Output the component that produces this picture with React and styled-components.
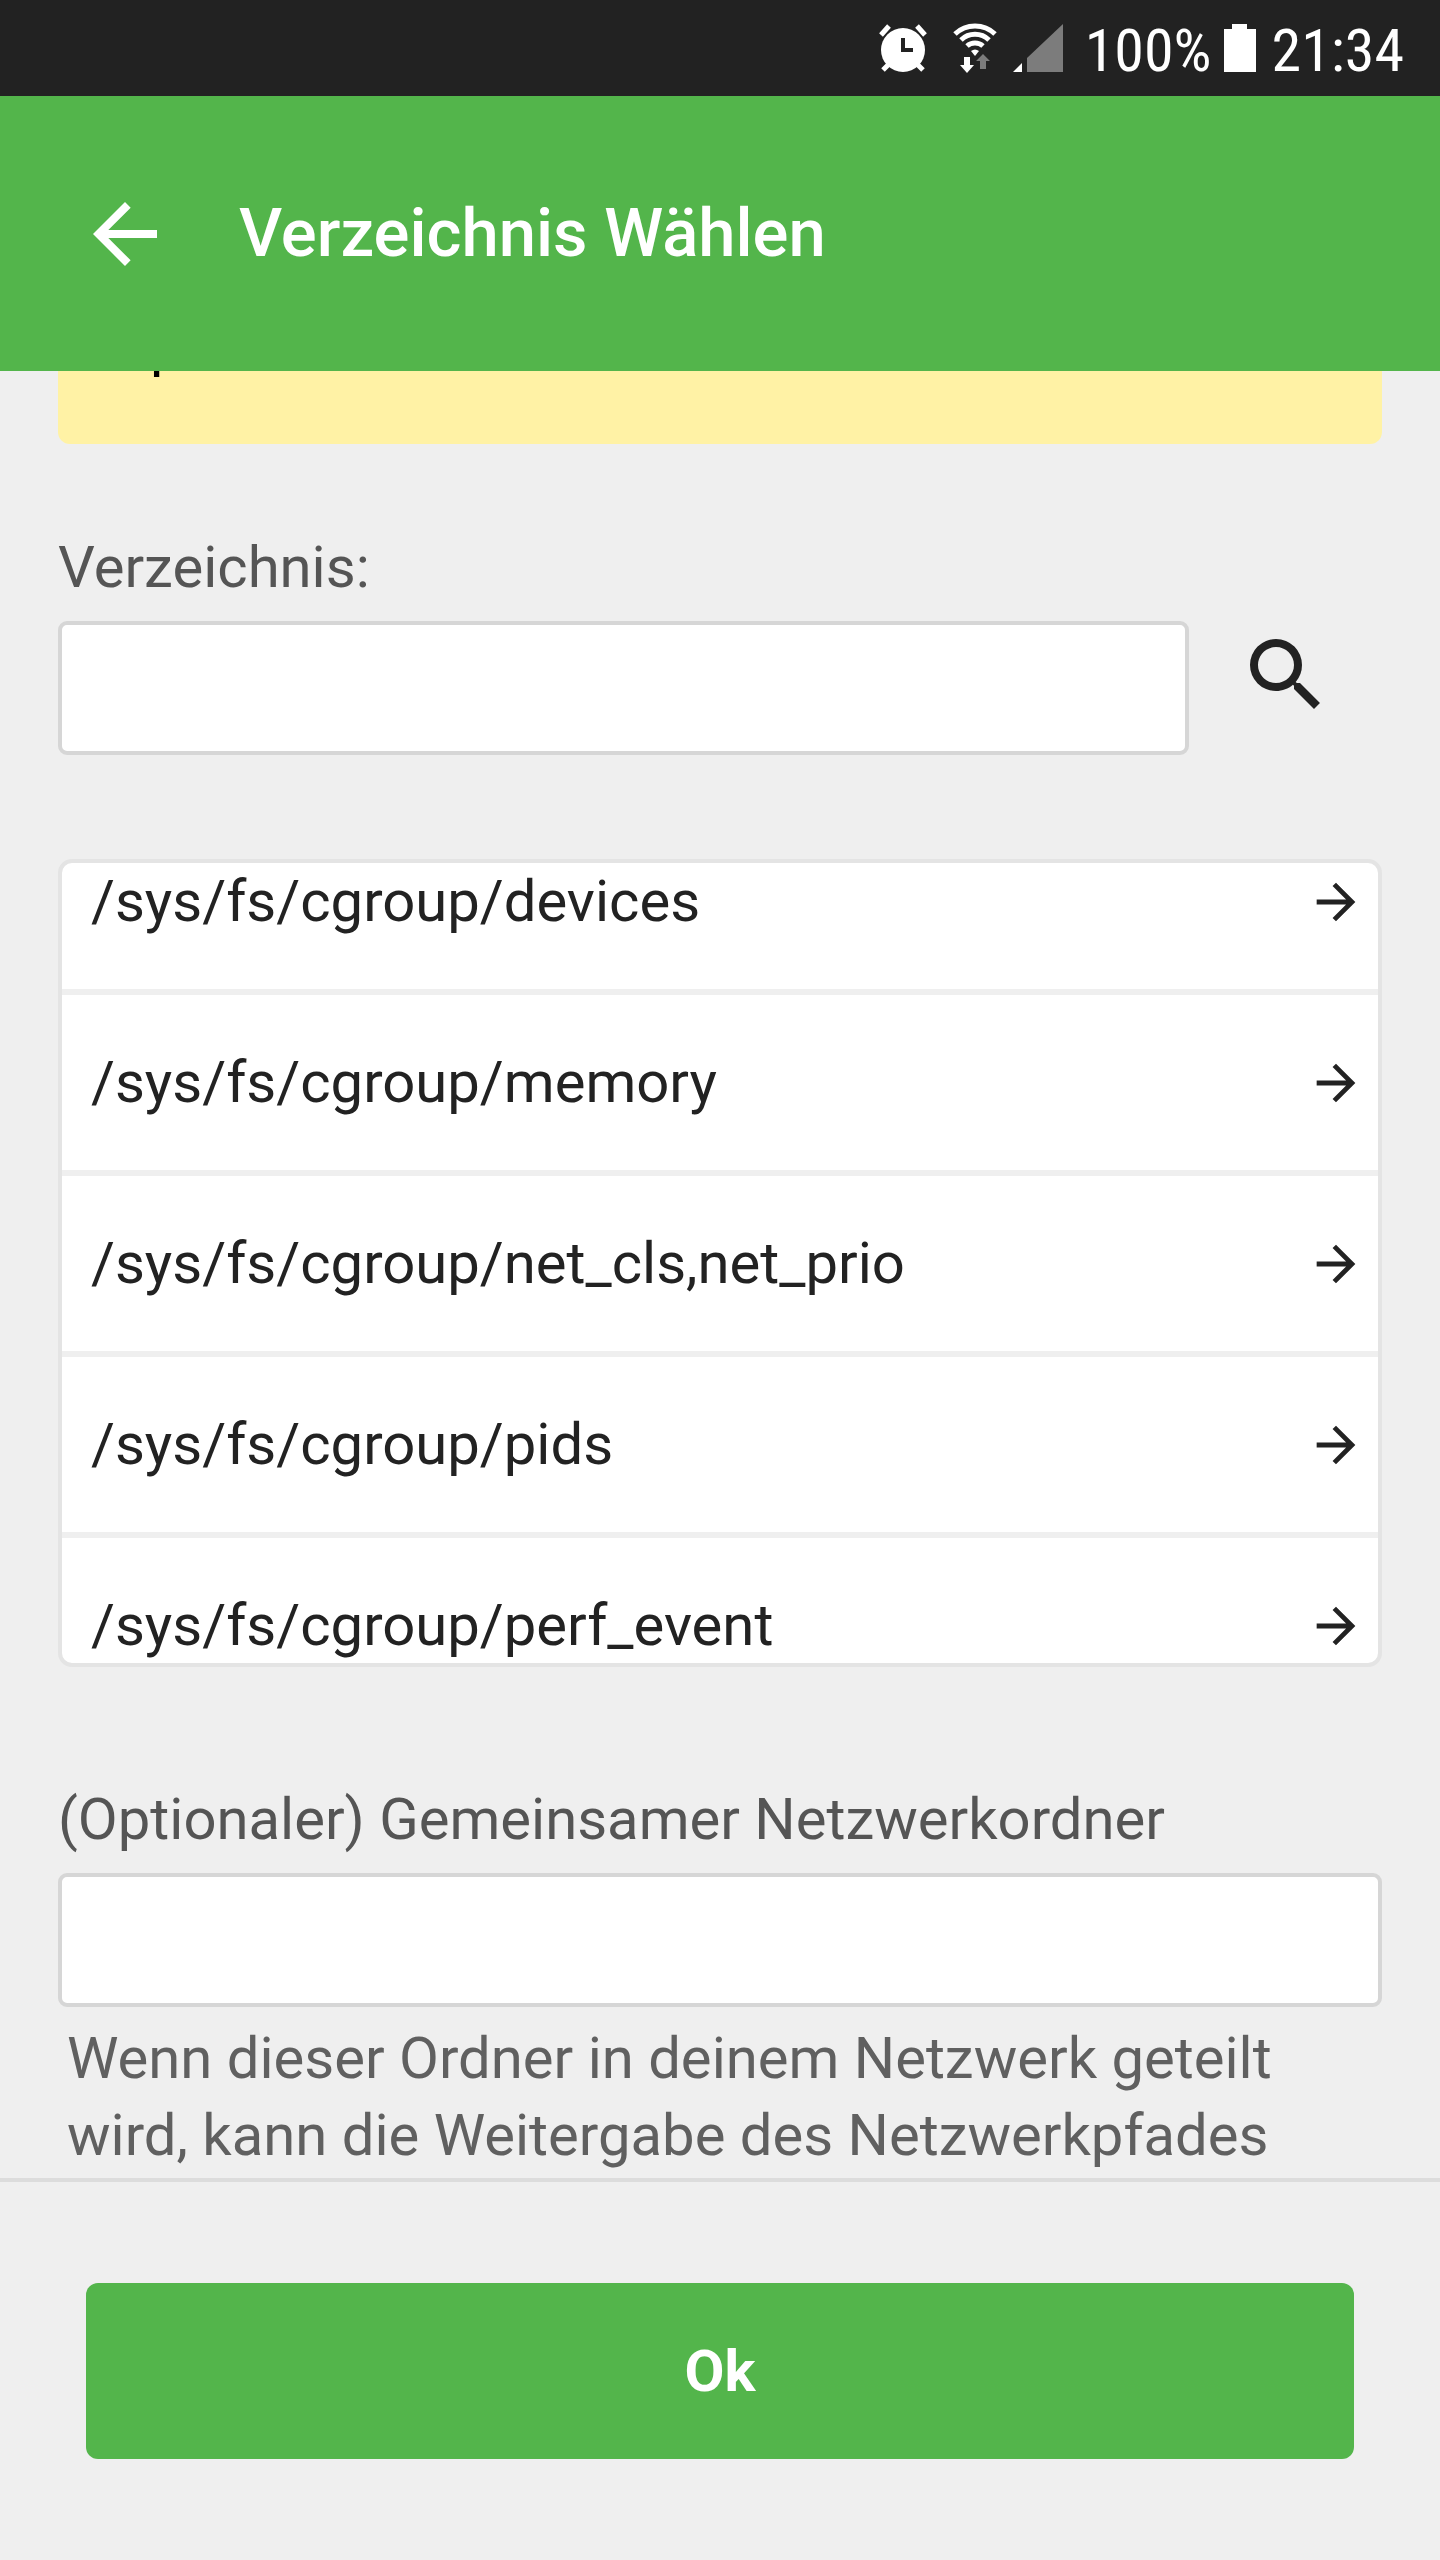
import React from 'react';
import styled, { createGlobalStyle } from 'styled-components';

const GlobalStyle = createGlobalStyle`
* {
  box-sizing: border-box;
}
body {
  margin: 0;
  background: #efefef;
  font-family: Roboto, "Liberation Sans", sans-serif;
}
`

const Screen = styled.div`
display: flex;
flex-direction: column;
min-height: 100vh;
font-size: 58px;
line-height: 77px;
color: #555;
`

const StatusBar = styled.div`
display: flex;
align-items: center;
justify-content: flex-end;
height: 96px;
padding-right: 36px;
background: #222;
color: #fff;
`

const StatusIcons = styled.div`
display: flex;
align-items: center;
gap: 16px;
margin-right: 22px;
`

const StatusText = styled.span`
padding-top: 4px;
font-family: "Roboto Condensed", Roboto, sans-serif;
font-size: 60px;
`

const AlarmSvg = styled.svg`
margin-right: 10px;
`

const BatterySvg = styled.svg`
margin: 0 16px 0 12px;
`

const Header = styled.header`
position: relative;
display: flex;
align-items: center;
gap: 66px;
height: 275px;
padding: 0 77px;
background: #53b54b;
color: #fff;
`

const IconButton = styled.button`
display: flex;
padding: 0;
border: 0;
background: none;
color: inherit;
`

const Title = styled.h1`
margin: 0;
font-size: 67px;
font-weight: 500;
`

const Content = styled.main`
flex: 1;
padding: 0 58px;
overflow: hidden;
`

// scrolled most of the way under the header
const Notice = styled.div`
margin: -124px 0 85px;
padding: 60px 92px;
border-radius: 12px;
background: #fff2a5;
color: #000;
`

const Label = styled.label`
display: block;
margin-bottom: 15px;
`

const TextInput = styled.input`
display: block;
flex: 1;
width: 100%;
min-width: 0;
height: 134px;
padding: 0 24px;
border: 4px solid #d6d6d6;
border-radius: 9px;
background: #fff;
font: inherit;
color: #222;
`

const SearchRow = styled.div`
display: flex;
align-items: flex-start;
margin-bottom: 104px;
`

const SearchButton = styled(IconButton)`
justify-content: center;
width: 193px;
padding: 6px 0;
color: #222;
`

const FolderList = styled.ul`
height: 808px;
margin: 0 0 114px;
padding: 0;
overflow: hidden;
list-style: none;
border: 4px solid #e4e4e4;
border-radius: 14px;
background: #fff;
`

const FolderItem = styled.li`
border-bottom: 6px solid #efefef;

&:first-child {
  margin-top: -49px;
}
`

const FolderButton = styled.button`
display: flex;
align-items: center;
justify-content: space-between;
width: 100%;
height: 175px;
padding: 0 13px 0 29px;
border: 0;
background: none;
font: inherit;
color: #222;
text-align: left;
`

const Help = styled.p`
margin: 13px 0 0;
padding: 0 9px;
color: #606060;
`

const Footer = styled.footer`
padding: 101px 86px;
border-top: 4px solid #dcdcdc;
`

const OkButton = styled.button`
display: block;
width: 100%;
height: 176px;
border: 0;
border-radius: 12px;
background: #53b54b;
color: #fff;
font: inherit;
font-weight: 700;
`

const folders = [
  '/sys/fs/cgroup/devices',
  '/sys/fs/cgroup/memory',
  '/sys/fs/cgroup/net_cls,net_prio',
  '/sys/fs/cgroup/pids',
  '/sys/fs/cgroup/perf_event',
];

const AlarmIcon = () => (
  <AlarmSvg width="48" height="48" viewBox="0 0 48 48" fill="none">
    <path d="M2 11 10 2M38 2l8 9" stroke="#fff" strokeWidth="5" />
    <path d="M10 40l-6 6M38 40l6 6" stroke="#fff" strokeWidth="5" />
    <circle cx="24" cy="26" r="22" fill="#fff" />
    <path d="M24 14v12h10" stroke="#222" strokeWidth="4" />
  </AlarmSvg>
);

const WifiIcon = () => (
  <svg width="44" height="50" viewBox="0 0 44 50" fill="none">
    <path d="M2 11a29 29 0 0 1 40 0" stroke="#fff" strokeWidth="5" />
    <path d="M8 17a20 20 0 0 1 28 0" stroke="#fff" strokeWidth="5" />
    <path d="M14 23a12 12 0 0 1 16 0" stroke="#fff" strokeWidth="5" />
    <path d="M18 28q4-3 8 0l-4 5z" fill="#fff" />
    <path d="M11 34h6v8h4l-7 8-7-8h4z" fill="#fff" />
    <path d="M27 46v-8h-4l7-7 7 7h-4v8z" fill="#7c7c7c" />
  </svg>
);

const SignalIcon = () => (
  <svg width="50" height="48" viewBox="0 0 50 48">
    <path d="M0 48l9-9v9z" fill="#fff" />
    <path d="M14 48V34L50 0v48z" fill="#7c7c7c" />
  </svg>
);

const BatteryIcon = () => (
  <BatterySvg width="32" height="48" viewBox="0 0 32 48">
    <path d="M0 5h8V0h15v5h9v43H0z" fill="#fff" />
  </BatterySvg>
);

const BackIcon = () => (
  <svg width="96" height="96" viewBox="0 0 24 24" fill="currentColor">
    <path d="M20 11H7.83l5.59-5.59L12 4l-8 8 8 8 1.41-1.41L7.83 13H20v-2z" />
  </svg>
);

const ForwardIcon = () => (
  <svg width="58" height="58" viewBox="0 0 24 24" fill="currentColor">
    <path d="M12 4l-1.41 1.41L16.17 11H4v2h12.17l-5.58 5.59L12 20l8-8z" />
  </svg>
);

const SearchIcon = () => (
  <svg width="96" height="96" viewBox="0 0 24 24" fill="currentColor">
    <path d="M15.5 14h-.79l-.28-.27A6.471 6.471 0 0 0 16 9.5 6.5 6.5 0 1 0 9.5 16c1.61 0 3.09-.59 4.23-1.57l.27.28v.79l5 4.99L20.49 19l-4.99-5zm-6 0C7.01 14 5 11.99 5 9.5S7.01 5 9.5 5 14 7.01 14 9.5 11.99 14 9.5 14z" />
  </svg>
);

const App = () => {

    return (
      <Screen>
        <GlobalStyle />
        <StatusBar>
          <StatusIcons>
            <AlarmIcon />
            <WifiIcon />
            <SignalIcon />
          </StatusIcons>
          <StatusText>100%</StatusText>
          <BatteryIcon />
          <StatusText>21:34</StatusText>
        </StatusBar>
        <Header>
          <IconButton type="button" aria-label="Zurück"><BackIcon /></IconButton>
          <Title>Verzeichnis Wählen</Title>
        </Header>
        <Content>
          <Notice>p</Notice>
          <Label htmlFor="directory">Verzeichnis:</Label>
          <SearchRow>
            <TextInput id="directory" type="text" />
            <SearchButton type="button" aria-label="Suchen"><SearchIcon /></SearchButton>
          </SearchRow>
          <FolderList>
            {folders.map((folder) => (
              <FolderItem key={folder}>
                <FolderButton type="button">
                  {folder}
                  <ForwardIcon />
                </FolderButton>
              </FolderItem>
            ))}
          </FolderList>
          <Label htmlFor="network">(Optionaler) Gemeinsamer Netzwerkordner</Label>
          <TextInput id="network" type="text" />
          <Help>Wenn dieser Ordner in deinem Netzwerk geteilt wird, kann die Weitergabe des Netzwerkpfades</Help>
        </Content>
        <Footer>
          <OkButton type="button">Ok</OkButton>
        </Footer>
      </Screen>
    );
  }

export default App;
